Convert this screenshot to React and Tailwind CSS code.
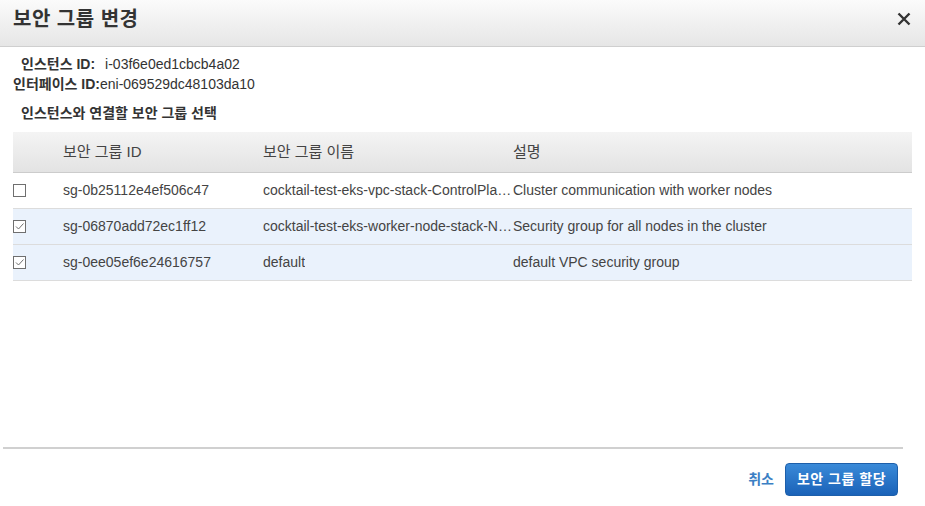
import React from "react";

const rows = [
  { checked: false, id: "sg-0b25112e4ef506c47", name: "cocktail-test-eks-vpc-stack-ControlPlaneSecurityGroup", desc: "Cluster communication with worker nodes" },
  { checked: true, id: "sg-06870add72ec1ff12", name: "cocktail-test-eks-worker-node-stack-NodeSecurityGroup", desc: "Security group for all nodes in the cluster" },
  { checked: true, id: "sg-0ee05ef6e24616757", name: "default", desc: "default VPC security group" },
];

function Check({ checked }) {
  return (
    <div className="w-[13px] h-[13px] border border-[#6f6f6f] bg-white flex items-center justify-center">
      {checked && (
        <svg width="11" height="11" viewBox="0 0 11 11">
          <path d="M2 5.5 L4.5 8 L9.5 2.5" fill="none" stroke="#6f6f6f" strokeWidth="1" />
        </svg>
      )}
    </div>
  );
}

export default function App() {
  const font = { fontFamily: '"Liberation Sans", Arial, "Noto Sans CJK KR", sans-serif' };
  return (
    <div className="w-[925px] h-[506px] bg-white flex flex-col text-[#333]" style={font}>
      <div className="h-[47px] shrink-0 flex items-center justify-between pl-[13px] pr-[14px] border-b border-[#cfcfcf] bg-gradient-to-b from-[#fbfbfb] to-[#e6e6e6]">
        <div className="text-[20px] font-bold text-[#333] tracking-[0.5px] leading-none -mt-[8px]">보안 그룹 변경</div>
        <svg width="14" height="14" viewBox="0 0 14 14" className="-mt-[8px]">
          <path d="M1.5 1.5 L12.5 12.5 M12.5 1.5 L1.5 12.5" stroke="#333" strokeWidth="2.4" />
        </svg>
      </div>
      <div className="flex flex-col pt-[7px] text-[14px] leading-[20px] text-[#333]">
        <div className="pl-[21px] flex">
          <span className="font-bold">인스턴스 ID:</span>
          <span className="ml-[10px]">i-03f6e0ed1cbcb4a02</span>
        </div>
        <div className="pl-[13px] flex">
          <span className="font-bold">인터페이스 ID:</span>
          <span>eni-069529dc48103da10</span>
        </div>
        <div className="pl-[21px] mt-[9px] font-bold">인스턴스와 연결할 보안 그룹 선택</div>
      </div>
      <div className="mx-[13px] mt-[9px] w-[899px]">
        <div className="h-[41px] flex items-center border-b border-[#cccccc] bg-gradient-to-b from-[#f4f4f4] to-[#e3e3e3] text-[15px] text-[#444]">
          <div className="w-[50px]" />
          <div className="w-[200px]">보안 그룹 ID</div>
          <div className="w-[250px]">보안 그룹 이름</div>
          <div className="flex-1">설명</div>
        </div>
        {rows.map((r, i) => (
          <div
            key={i}
            className={`h-[36px] flex items-center border-b border-[#dcdcdc] text-[14px] text-[#444] ${r.checked ? "bg-[#eaf2fc]" : "bg-white"}`}
          >
            <div className="w-[50px] flex items-center">
              <Check checked={r.checked} />
            </div>
            <div className="w-[200px] truncate">{r.id}</div>
            <div className="w-[250px] flex">
              <span className="truncate">{r.name}</span>
            </div>
            <div className="flex-1 truncate">{r.desc}</div>
          </div>
        ))}
      </div>
      <div className="flex-1" />
      <div className="mx-[3px] w-[900px] border-t-2 border-[#d0d0d0]" />
      <div className="pt-[14px] pb-[10px] flex items-center justify-end pr-[27px] gap-[11px]">
        <span className="text-[14px] font-bold text-[#3b7fc4]">취소</span>
        <button className="h-[33px] w-[113px] rounded-[4px] border border-[#1d5faa] bg-gradient-to-b from-[#3a8ad8] to-[#1a62b8] text-white text-[14px] font-bold tracking-[0.5px]">
          보안 그룹 할당
        </button>
      </div>
    </div>
  );
}
